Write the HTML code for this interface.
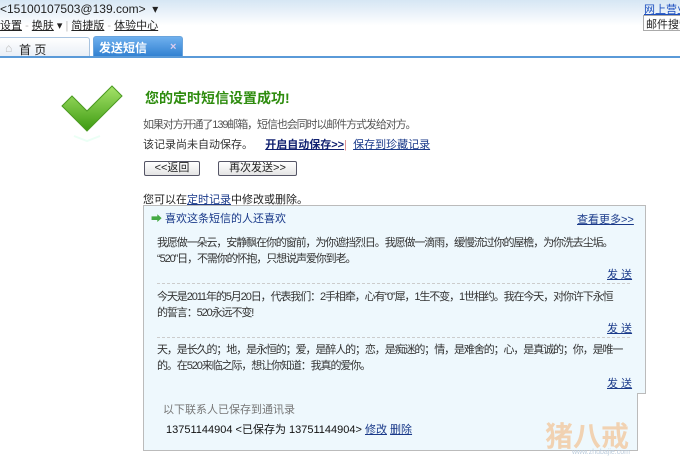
<!DOCTYPE html>
<html><head><meta charset="utf-8"><style>
*{margin:0;padding:0;box-sizing:border-box}
body{width:680px;height:460px;overflow:hidden;background:#fff;font-family:"Liberation Sans","Noto Sans CJK SC",sans-serif;font-size:12px;color:#222;position:relative}
.a{position:absolute;white-space:nowrap}
a,u{color:#1a3a8a;text-decoration:underline}
.top{position:absolute;left:0;top:0;width:680px;height:57px;background:linear-gradient(#d6e6f4,#fff 45%)}
.line{position:absolute;left:0;top:56px;width:680px;height:2px;background:#5a9ad8}
.tab1{position:absolute;left:-2px;top:37px;width:92px;height:20px;border:1px solid #a9c4e0;border-bottom:none;border-radius:3px 3px 0 0;background:linear-gradient(#fff,#e8eef6)}
.tab2{position:absolute;left:93px;top:36px;width:90px;height:21px;border:1px solid #6aa4dc;border-bottom:none;border-radius:3px 3px 0 0;background:linear-gradient(#6fb0ee,#2f7fd0);color:#fff;font-weight:bold}
.btn{position:absolute;height:15px;border:1px solid #556;border-radius:2px;background:linear-gradient(#fff,#e4e4e4);font-size:11px;text-align:center;line-height:13px}
.box{position:absolute;left:143px;top:205px;width:503px;height:189px;background:#eef8fd;border:1px solid #bbb}
.box2{position:absolute;left:143px;top:393px;width:495px;height:58px;background:#eef8fd;border:1px solid #bbb;border-top:none}
.p{font-size:11px;color:#333}
.t{letter-spacing:-1.1px}
.dash{position:absolute;left:157px;width:473px;border-top:1px dashed #ccc}
</style></head><body>
<div class="top"></div>
<div class="a" style="left:0;top:2px;font-size:12px">&lt;15100107503@139.com&gt; &nbsp;▾</div>
<div class="a" style="left:0;top:17px;font-size:11px"><u style="color:#222">设置</u> <span style="color:#bbb">-</span> <u style="color:#222">换肤</u> ▾ <span style="color:#bbb">|</span> <u style="color:#222">简捷版</u> <span style="color:#bbb">-</span> <u style="color:#222">体验中心</u></div>
<div class="a" style="left:644px;top:1px;font-size:11px"><a style="color:#1c4fbf">网上营业</a></div>
<div class="a" style="left:643px;top:15px;width:40px;height:16px;border:1px solid #aaa;background:#fff;font-size:11px;padding-left:2px">邮件搜索</div>
<div class="tab1"><span class="a" style="left:6px;top:3px;color:#bbb">⌂</span><span class="a" style="left:20px;top:3px;font-size:12px">首 页</span></div>
<div class="tab2"><span class="a" style="left:5px;top:2px">发送短信</span><span class="a" style="left:76px;top:4px;color:#dce;font-size:11px">×</span></div>
<div class="line"></div>
<svg class="a" style="left:60px;top:84px" width="65" height="60" viewBox="0 0 65 60"><defs><linearGradient id="g" x1="0" y1="0" x2="0" y2="1"><stop offset="0" stop-color="#a6e36a"/><stop offset="1" stop-color="#3c9a10"/></linearGradient></defs><path d="M2 22 L12 12 L27 27 L52 2 L62 12 L27 47 Z" fill="url(#g)" stroke="#4a9a20" stroke-width="1"/><path d="M14 52 L27 57 L40 52" fill="none" stroke="#dfe" stroke-width="2" opacity=".6"/></svg>
<div class="a" style="left:145px;top:88px;font-size:14px;font-weight:bold;color:#2e8c0e">您的定时短信设置成功!</div>
<div class="a p t" style="left:143px;top:116px;color:#555">如果对方开通了139邮箱，短信也会同时以邮件方式发给对方。</div>
<div class="a p" style="left:143px;top:136px;color:#333">该记录尚未自动保存。 &nbsp; &nbsp;<b><a style="color:#102070">开启自动保存&gt;&gt;</a></b><span style="color:#d88">|</span> &nbsp;<a>保存到珍藏记录</a></div>
<div class="btn" style="left:144px;top:161px;width:56px">&lt;&lt;返回</div>
<div class="btn" style="left:218px;top:161px;width:79px">再次发送&gt;&gt;</div>
<div class="a p" style="left:143px;top:191px;color:#222">您可以在<a>定时记录</a>中修改或删除。</div>
<div class="box"></div>
<div class="a p" style="left:151px;top:210px;color:#1a3a8a"><span style="color:#4a4">➡</span> 喜欢这条短信的人还喜欢</div>
<div class="a p" style="left:577px;top:211px"><a>查看更多&gt;&gt;</a></div>
<div class="a p t" style="left:157px;top:235px;line-height:16px">我愿做一朵云，安静飘在你的窗前，为你遮挡烈日。我愿做一滴雨，缓慢流过你的屋檐，为你洗去尘垢。<br>“520”日，不需你的怀抱，只想说声爱你到老。</div>
<div class="a p" style="left:607px;top:266px"><a>发 送</a></div>
<div class="dash" style="top:283px"></div>
<div class="a p t" style="left:157px;top:289px;line-height:16px">今天是2011年的5月20日，代表我们：2手相牵，心有“0”犀，1生不变，1世相约。我在今天，对你许下永恒<br>的誓言：520永远不变!</div>
<div class="a p" style="left:607px;top:320px"><a>发 送</a></div>
<div class="dash" style="top:337px"></div>
<div class="a p t" style="left:157px;top:342px;line-height:16px">天，是长久的；地，是永恒的；爱，是醉人的；恋，是痴迷的；情，是难舍的；心，是真诚的；你，是唯一<br>的。在520来临之际，想让你知道：我真的爱你。</div>
<div class="a p" style="left:607px;top:375px"><a>发 送</a></div>
<div class="box2"></div>
<div class="a p" style="left:163px;top:401px;color:#777">以下联系人已保存到通讯录</div>
<div class="a p" style="left:166px;top:421px;color:#111">13751144904 &lt;已保存为 13751144904&gt; <a>修改</a> <a>删除</a></div>
<div class="a" style="left:545px;top:415px;font-size:28px;color:#f2c9a0;font-weight:bold;opacity:.8">猪八戒</div>
<div class="a" style="left:572px;top:449px;font-size:7px;color:#bcd">www.zhubajie.com</div>
</body></html>
